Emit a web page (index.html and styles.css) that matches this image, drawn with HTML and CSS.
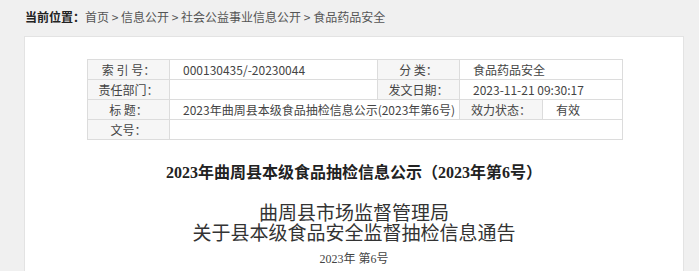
FILE: index.html
```html
<!DOCTYPE html>
<html lang="zh-CN">
<head>
  <meta charset="UTF-8">
  <meta name="viewport" content="width=device-width, initial-scale=1.0">
  <title>食品药品安全</title>
  <link rel="stylesheet" href="styles.css">
</head>
<body>
  <div class="crumbs">
    <strong>当前位置：</strong>首页 &gt; 信息公开 &gt; 社会公益事业信息公开 &gt; 食品药品安全
  </div>

  <div class="panel">
    <div class="meta">
      <div class="label">索 引 号：</div>
      <div class="value">000130435/-20230044</div>
      <div class="label">分 类：</div>
      <div class="value span2">食品药品安全</div>

      <div class="label">责任部门：</div>
      <div class="value"></div>
      <div class="label">发文日期：</div>
      <div class="value span2">2023-11-21 09:30:17</div>

      <div class="label">标 题：</div>
      <div class="value span2">2023年曲周县本级食品抽检信息公示(2023年第6号)</div>
      <div class="label">效力状态：</div>
      <div class="value">有效</div>

      <div class="label">文号：</div>
      <div class="value span4"></div>
    </div>

    <h1 class="title">2023年曲周县本级食品抽检信息公示（2023年第6号）</h1>

    <div class="notice">
      <p class="notice-head">曲周县市场监督管理局<br>关于县本级食品安全监督抽检信息通告</p>
      <p class="notice-no">2023年 第6号</p>
    </div>
  </div>
</body>
</html>
```

FILE: styles.css
```css
body {
  margin: 0;
  background-color: #f0f0f0;
  font-family: "Noto Sans CJK SC", "Microsoft YaHei", sans-serif;
  font-size: 12px;
  color: #333;
}

.crumbs {
  padding: 8px 0 0 25px;
  height: 20px;
  line-height: 18px;
  color: #555;
}

.crumbs strong {
  color: #222;
}

.panel {
  margin: 8px 0 0 24px;
  width: 660px;
  box-sizing: border-box;
  background: #fff;
  border: 1px solid #e3e3e3;
  border-bottom: none;
  padding: 22px 0 0 62px;
  height: 235px;
}

/* info table */
.meta {
  display: grid;
  grid-template-columns: 82px 208px 82px 83px 80px;
  grid-auto-rows: 20px;
  width: 536px;
  box-sizing: border-box;
  border-top: 1px solid #dcdcdc;
  border-left: 1px solid #dcdcdc;
}

.meta div {
  box-sizing: border-box;
  border-right: 1px solid #dcdcdc;
  border-bottom: 1px solid #dcdcdc;
  line-height: 19px;
  white-space: nowrap;
  overflow: hidden;
}

.meta .label {
  background-color: #f6f6f6;
  text-align: center;
  color: #444;
}

.meta .value {
  padding-left: 13px;
  color: #444;
}

.meta .span2 {
  grid-column: span 2;
}

.meta .span4 {
  grid-column: span 4;
}

.title {
  margin: 22px 0 0 -62px;
  font-family: "Liberation Serif", "Noto Sans CJK SC", serif;
  font-size: 16px;
  line-height: 22px;
  font-weight: bold;
  text-align: center;
  color: #222;
}

.notice {
  margin-left: -62px;
  text-align: center;
}

.notice-head {
  margin: 20px 0 0;
  font-family: "Liberation Serif", "Noto Sans CJK SC", serif;
  font-size: 19px;
  line-height: 20px;
  color: #333;
}

.notice-no {
  margin: 6px 0 0;
  font-family: "Liberation Serif", "Noto Sans CJK SC", serif;
  font-size: 12px;
  line-height: 18px;
  color: #444;
}
```
